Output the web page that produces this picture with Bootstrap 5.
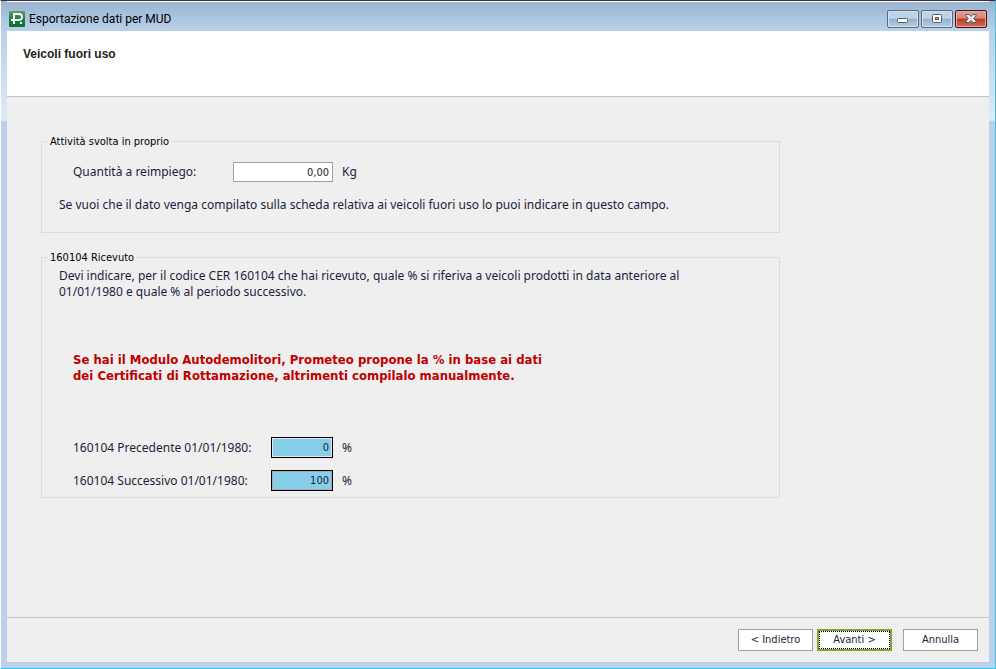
<!DOCTYPE html>
<html lang="it">
<head>
<meta charset="utf-8">
<meta name="viewport" content="width=device-width, initial-scale=1">
<title>Esportazione dati per MUD</title>
<link href="https://cdn.jsdelivr.net/npm/bootstrap@5.3.0/dist/css/bootstrap.min.css" rel="stylesheet">
<style>
body { font-family: "Noto Sans", sans-serif; font-size: 12px; line-height: 16px; color: #1c1c3c; background: #b9d1ea; }
.win { border: 1px solid #fff; border-top-color: #3a3138; border-right-color: #35c5e0; border-bottom-color: #25cbe0; padding: 0 6px 6px; background: linear-gradient(#99b4d1, #b9d1ea 30px, #dfeaf6 119px, #b9d1ea 121px); }
.titlebar { height: 30px; border-top: 1px solid #fff; padding: 5px 2px 0; font: 12px/16px Roboto, "Noto Sans", sans-serif; color: #000; }
.win-controls { gap: 2px; }
.win-btn { width: 32px; height: 18px; padding: 0; border: 1px solid #56697f; border-radius: 2px; box-shadow: inset 0 0 0 1px #d3e2f1; background: linear-gradient(#bfd3e7 0 45%, #98b3cf 50%, #b4cde6); display: flex; align-items: center; justify-content: center; }
.win-btn.close-btn { border-color: #42121f; box-shadow: inset 0 0 0 1px #e6a89d; background: linear-gradient(#e2a094, #d98476 45%, #bc3a24 50%, #cf7058); }
.client { background: #efefef; }
.banner { height: 66px; background: #fff; border-bottom: 1px solid #c4c4c4; padding: 15px 16px; }
.banner h1 { font: bold 12px/16px "Liberation Sans", Arial, sans-serif; color: #222; margin: 0; }
.groups { padding: 36px 0 36px 34px; }
.group { width: 78%; border: 1px solid #dcdcdc; padding: 0 17px; }
.group legend, .num, .dlg-btn, .notice { font-family: "DejaVu Sans Condensed", "DejaVu Sans", sans-serif; }
.group legend { float: none; width: auto; margin: 0 0 0 -11px; padding: 1px 2px 0; font-size: 11px; line-height: 15px; color: #000; }
.field-row { padding-left: 14px; }
.own-row { margin: 13px 0 15px; }
.lbl-a { width: 160px; }
.lbl-b { width: 198px; }
.num { border: 1px solid #a0a0a0; border-radius: 0; background: #fff; color: #222; font-size: 11px; line-height: 16px; text-align: right; padding: 0 3px; height: 20px; width: 100px; margin-right: 9px; }
.num.pct { width: 62px; height: 21px; border-color: #000; background: #87ceeb; box-shadow: inset 0 0 0 1px #a9a9a9; color: #1c1c3c; }
.num.first { box-shadow: inset 0 0 0 1px #e6e6e6; }
.own-note { margin: 0 0 19px; }
.cer-note { margin: 3px 0 0; }
.notice { color: #c00000; font-size: 13px; font-weight: bold; padding-left: 14px; margin: 52px 0 53px; }
.last-row { margin-bottom: 6px; }
.actions { border-top: 1px solid #c4c4c4; height: 45px; padding-right: 11px; }
.dlg-btn { width: 75px; height: 22px; padding: 0; border: 1px solid #a0a0a0; border-radius: 0; background: #fff; color: #1c1c3c; font-size: 11px; line-height: 16px; }
.dlg-btn.primary { border: 2px solid #7aa82a; outline: 1px dotted #000; outline-offset: -3px; margin-right: 11px; }
</style>
<script src="https://cdn.jsdelivr.net/npm/bootstrap@5.3.0/dist/js/bootstrap.bundle.min.js"></script>
</head>
<body>
<div class="win min-vh-100 d-flex flex-column">
  <header class="titlebar d-flex align-items-center">
    <svg width="16" height="16" viewBox="0 0 16 16" aria-hidden="true">
      <defs><linearGradient id="lg" x2="0" y2="1"><stop stop-color="#5fa05f"/><stop offset=".5" stop-color="#188040"/><stop offset="1" stop-color="#087338"/></linearGradient></defs>
      <rect width="16" height="16" rx="1" fill="url(#lg)"/>
      <path d="M4 3H10C14 3 14 9 10 9H2M5 3V13" fill="none" stroke="#fff" stroke-width="1.800"/>
      <path d="M11 11h2v2h-2z" fill="#fff"/>
    </svg>
    <span class="ms-1 me-auto">Esportazione dati per MUD</span>
    <div class="d-flex win-controls">
      <button type="button" class="win-btn" aria-label="Riduci a icona"><svg class="mt-1" width="12" height="6" viewBox="0 0 12 6"><rect x=".5" y=".5" width="10" height="4" rx="1" fill="#fff" stroke="#555a68"/></svg></button>
      <button type="button" class="win-btn" aria-label="Ingrandisci"><svg width="12" height="10" viewBox="0 0 12 10"><rect x="1.500" y=".5" width="9" height="8" rx="1" fill="#fff" stroke="#555a68"/><rect x="4.500" y="3.500" width="3" height="2" fill="#9bb5d0" stroke="#555a68"/></svg></button>
      <button type="button" class="win-btn close-btn" aria-label="Chiudi"><svg width="12" height="10" viewBox="0 0 12 10"><path d="M1 .5H4L6 2.500 8 .5H11V2L8.500 4.500 11 7V8.500H8L6 6.500 4 8.500H1V7L3.500 4.500 1 2Z" fill="#eef0f4" stroke="#555a68"/></svg></button>
    </div>
  </header>
  <main class="client flex-grow-1 d-flex flex-column">
    <div class="banner"><h1>Veicoli fuori uso</h1></div>
    <form class="groups flex-grow-1" id="mud">
      <fieldset class="group mb-3">
        <legend>Attività svolta in proprio</legend>
        <div class="field-row own-row d-flex align-items-center">
          <label class="lbl-a" for="qta">Quantità a reimpiego:</label>
          <input class="num" id="qta" type="text" value="0,00"><span>Kg</span>
        </div>
        <p class="own-note">Se vuoi che il dato venga compilato sulla scheda relativa ai veicoli fuori uso lo puoi indicare in questo campo.</p>
      </fieldset>
      <fieldset class="group">
        <legend>160104 Ricevuto</legend>
        <p class="cer-note">Devi indicare, per il codice CER 160104 che hai ricevuto, quale % si riferiva a veicoli prodotti in data anteriore al<br>01/01/1980 e quale % al periodo successivo.</p>
        <p class="notice">Se hai il Modulo Autodemolitori, Prometeo propone la % in base ai dati<br>dei Certificati di Rottamazione, altrimenti compilalo manualmente.</p>
        <div class="field-row d-flex align-items-center mb-2 pb-1">
          <label class="lbl-b" for="prec">160104 Precedente 01/01/1980:</label>
          <input class="num pct first" id="prec" type="text" value="0"><span>%</span>
        </div>
        <div class="field-row last-row d-flex align-items-center">
          <label class="lbl-b" for="succ">160104 Successivo 01/01/1980:</label>
          <input class="num pct" id="succ" type="text" value="100"><span>%</span>
        </div>
      </fieldset>
    </form>
    <footer class="actions d-flex align-items-center justify-content-end">
      <button type="button" class="dlg-btn me-1">&lt; Indietro</button>
      <button type="submit" form="mud" class="dlg-btn primary">Avanti &gt;</button>
      <button type="button" class="dlg-btn">Annulla</button>
    </footer>
  </main>
</div>
</body>
</html>
